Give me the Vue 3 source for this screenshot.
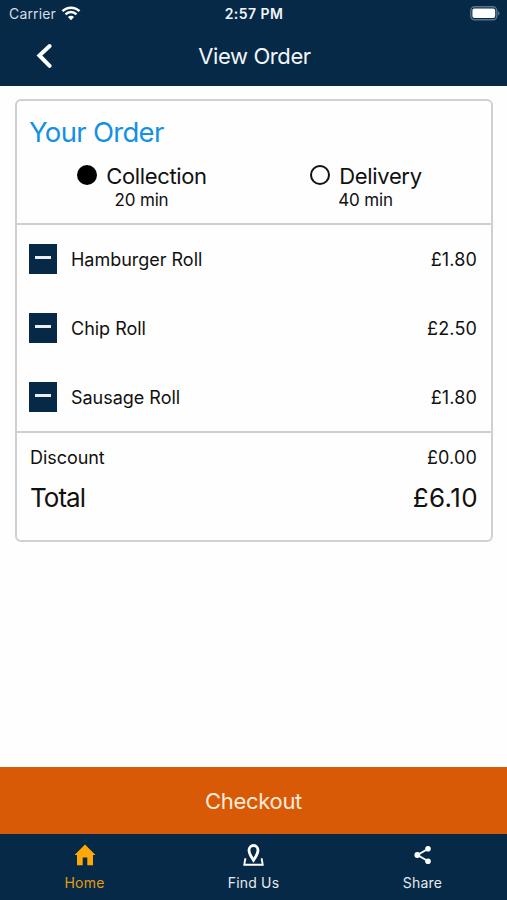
<script setup>
const items = [
  { name: 'Hamburger Roll', price: '£1.80' },
  { name: 'Chip Roll', price: '£2.50' },
  { name: 'Sausage Roll', price: '£1.80' },
]
</script>

<template>
  <div class="screen">
    <header class="header">
      <div class="status">
        <div class="carrier">
          <span class="carrier-name">Carrier</span>
          <svg class="wifi" width="20" height="15" viewBox="0 0 20 15">
            <path d="M1.500 5.200C6.200 .5 13.800 .5 18.500 5.200" />
            <path d="M4.500 8.300C7.600 5.300 12.400 5.300 15.500 8.300" />
            <path class="dot" d="M10 14.300L6.900 11.100Q10 8.500 13.100 11.100Z" />
          </svg>
        </div>
        <span class="time">2:57 PM</span>
        <div class="battery-wrap">
          <svg width="30" height="15" viewBox="0 0 30 15">
            <rect x=".8" y=".8" width="26" height="13" rx="3.800" fill="none" stroke="#58758c" stroke-width="1.400" />
            <rect x="2.400" y="2.500" width="22.800" height="9.600" rx="2" fill="#fff" />
            <path d="M28 5v4.600q1.500-.7 1.500-2.300T28 5z" fill="#58758c" />
          </svg>
        </div>
      </div>
      <div class="nav">
        <svg class="back" width="16" height="26" viewBox="0 0 16 26">
          <path d="M13.600 3L3.400 12.500L13.600 22.800" />
        </svg>
        <h1 class="title">View Order</h1>
      </div>
    </header>

    <main class="main">
      <section class="card">
        <div class="top">
          <h2 class="heading">Your Order</h2>
          <div class="options">
            <div class="option">
              <div class="choice"><i class="radio filled"></i><span>Collection</span></div>
              <div class="mins">20 min</div>
            </div>
            <div class="option">
              <div class="choice"><i class="radio"></i><span>Delivery</span></div>
              <div class="mins">40 min</div>
            </div>
          </div>
        </div>
        <div class="items">
          <div v-for="item in items" :key="item.name" class="item">
            <button class="minus" aria-label="Remove"><i></i></button>
            <span class="name">{{ item.name }}</span>
            <span class="price">{{ item.price }}</span>
          </div>
        </div>
        <div class="totals">
          <div class="discount"><span>Discount</span><span class="price">£0.00</span></div>
          <div class="total"><span class="total-label">Total</span><span class="total-price">£6.10</span></div>
        </div>
      </section>
    </main>

    <button class="checkout"><span>Checkout</span></button>
    <nav class="tabs">
      <div class="tab active">
        <svg width="24" height="24" viewBox="0 0 24 24"><path d="M12 1.500L1.500 12.100H4V22.300H9.700V14.500H14.300V22.300H20V12.100H22.500Z" fill="currentColor" /></svg>
        <span>Home</span>
      </div>
      <div class="tab">
        <svg width="24" height="24" viewBox="0 0 24 24" fill="none" stroke="currentColor" stroke-width="2.200">
          <path d="M11.500 17.200C9.200 13.500 7 10.800 7 7.200A4.500 4.700 0 0 1 16 7.200C16 10.800 13.800 13.500 11.500 17.200Z" stroke-width="2.800" />
          <path d="M4.200 16.200H3.200L2.300 21.700H20.700L19.800 16.200H18.800" stroke-width="1.900" />
        </svg>
        <span>Find Us</span>
      </div>
      <div class="tab">
        <svg width="24" height="24" viewBox="0 0 24 24">
          <path d="M17.200 5.700L6.500 12L17.200 18.300" fill="none" stroke="currentColor" stroke-width="1.900" />
          <g fill="currentColor"><circle cx="17" cy="5.700" r="2.800" /><circle cx="6.300" cy="12" r="2.900" /><circle cx="17" cy="18.300" r="2.800" /></g>
        </svg>
        <span>Share</span>
      </div>
    </nav>
  </div>
</template>

<style>
body {
  background: #fff;
}
</style>

<style scoped>
.screen {
  width: 507px;
  height: 900px;
  display: flex;
  flex-direction: column;
  font-family: Inter, "Liberation Sans", sans-serif;
  color: #111;
  background: #fefefe;
  overflow: hidden;
}
.screen * {
  box-sizing: border-box;
}
button {
  border: 0;
  padding: 0;
  font-family: inherit;
}
span {
  white-space: nowrap;
}
.header {
  height: 86px;
  background: #052946;
  color: #f2f6fa;
}
.status {
  display: grid;
  grid-template-columns: 1fr auto 1fr;
  align-items: center;
  height: 27px;
  padding: 0 7px 0 9px;
}
.carrier {
  display: flex;
  align-items: center;
  gap: 5px;
  font-size: 14px;
  letter-spacing: 0.15px;
  color: #d5dde4;
}
.wifi {
  fill: none;
  stroke: #fff;
  stroke-width: 2.4;
}
.wifi .dot {
  fill: #fff;
  stroke: none;
}
.time {
  font-size: 14px;
  font-weight: 600;
  letter-spacing: 0.45px;
  margin-right: 1px;
}
.battery-wrap {
  display: flex;
  justify-content: flex-end;
}
.nav {
  display: grid;
  grid-template-columns: 1fr auto 1fr;
  align-items: center;
  height: 56px;
  padding: 1px 36px 0;
}
.back {
  fill: none;
  stroke: #fff;
  stroke-width: 4;
  stroke-linecap: round;
}
.title {
  margin: 0 0 0 2px;
  font-size: 22px;
  font-weight: 400;
  letter-spacing: -0.4px;
}
.main {
  flex: 1;
  padding: 13px 14px 0 15px;
}
.card {
  height: 443px;
  border: 2px solid #d0d0d0;
  border-radius: 6px;
}
.top {
  height: 124px;
  padding: 13px 13px 0;
  border-bottom: 2px solid #d0d0d0;
}
.heading {
  margin: 0 0 0 -1px;
  font-size: 27.5px;
  line-height: 37px;
  font-weight: 400;
  letter-spacing: -0.7px;
  color: #1590e3;
}
.options {
  display: grid;
  grid-template-columns: 1fr 1fr;
  padding-top: 11px;
}
.option {
  text-align: center;
}
.choice {
  display: flex;
  align-items: center;
  justify-content: center;
  gap: 9px;
  height: 27px;
  font-size: 22px;
  letter-spacing: -0.35px;
}
.radio {
  width: 20px;
  height: 20px;
  margin-bottom: 1px;
  border: 2px solid #111;
  border-radius: 50%;
}
.radio.filled {
  background: #000;
  border-color: #000;
}
.mins {
  margin-left: -1px;
  font-size: 17px;
  letter-spacing: -0.15px;
  line-height: 22px;
}
.items {
  height: 208px;
  border-bottom: 2px solid #d0d0d0;
}
.item {
  height: 69px;
  display: flex;
  align-items: center;
  padding: 0 14px 0 12px;
  font-size: 18px;
}
.minus {
  width: 28px;
  height: 30px;
  margin: 0 14px 1px 0;
  background: #052946;
  display: grid;
  place-items: center;
}
.minus i {
  width: 16px;
  height: 3px;
  margin-bottom: 3px;
  background: #e9eff4;
}
.name {
  letter-spacing: -0.02px;
}
.price {
  margin-left: auto;
  font-size: 18px;
  letter-spacing: 0.15px;
}
.totals {
  padding: 9px 14px 0 13px;
}
.discount,
.total {
  display: flex;
  justify-content: space-between;
  align-items: center;
}
.discount {
  height: 30px;
  font-size: 18px;
  letter-spacing: -0.05px;
}
.total {
  height: 51px;
  font-size: 26px;
}
.total-label {
  letter-spacing: -0.95px;
}
.total-price {
  letter-spacing: 0.4px;
  margin-right: -1px;
}
.checkout {
  height: 67px;
  background: #d85a06;
  color: #ffeada;
  font-size: 22px;
  letter-spacing: -0.3px;
}
.tabs {
  height: 66px;
  display: grid;
  grid-template-columns: repeat(3, 1fr);
  background: #052946;
  color: #fff;
}
.tab {
  display: flex;
  flex-direction: column;
  align-items: center;
  padding-top: 9px;
  font-size: 14px;
  letter-spacing: 0.2px;
}
.tab span {
  margin-top: 7px;
  line-height: 18px;
  opacity: 0.9;
}
.tab.active {
  color: #ffa80c;
}
</style>
